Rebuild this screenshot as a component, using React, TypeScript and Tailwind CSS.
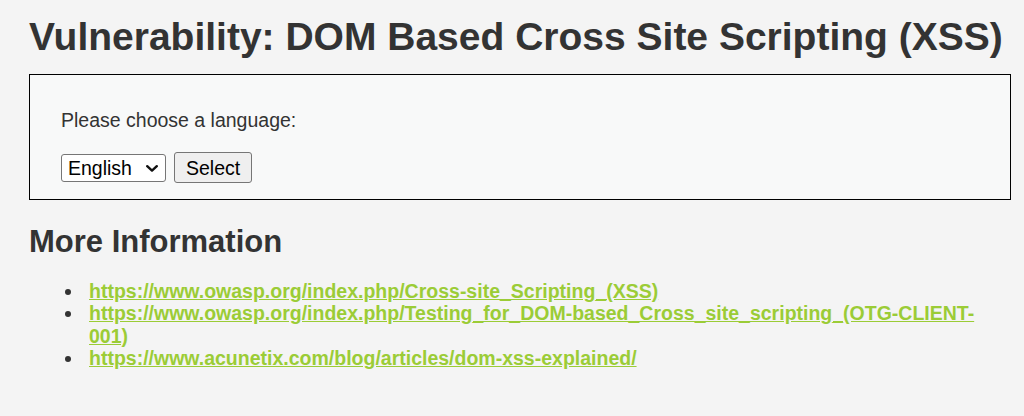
import React from "react";

export default function App() {
  const links = [
    "https://www.owasp.org/index.php/Cross-site_Scripting_(XSS)",
    "https://www.owasp.org/index.php/Testing_for_DOM-based_Cross_site_scripting_(OTG-CLIENT-001)",
    "https://www.acunetix.com/blog/articles/dom-xss-explained/",
  ];
  return (
    <div
      className="min-h-[416px] w-full bg-[#f4f4f4] pl-[29px] pr-[13px] pt-[14px] pb-[20px] text-[#333333]"
      style={{ fontFamily: '"Liberation Sans", Arial, sans-serif' }}
    >
      <h1 className="m-0 text-[39px] font-bold leading-[45px] text-[#333333]">
        Vulnerability: DOM Based Cross Site Scripting (XSS)
      </h1>

      <div className="mt-[15px] border border-black bg-[#f8f9f9] pl-[31px] pr-[20px] pt-[34px] pb-[16px]">
        <p className="m-0 text-[19.5px] leading-[22px] text-[#333333]">
          Please choose a language:
        </p>
        <div className="mt-[21px] flex h-[31px] items-center gap-[8px]">
          <div className="relative h-[28px] w-[105px]">
            <select
              defaultValue="English"
              className="h-[28px] w-[105px] appearance-none rounded-[3px] border border-[#767676] bg-white pl-[6px] text-[19.5px] leading-[24px] text-black outline-none"
            >
              <option value="English">English</option>
              <option value="French">French</option>
              <option value="Spanish">Spanish</option>
              <option value="German">German</option>
            </select>
            <svg
              className="pointer-events-none absolute right-[8px] top-[11px]"
              width="12"
              height="7"
              viewBox="0 0 12 7"
              fill="none"
            >
              <path
                d="M1.2 1.2 L6 5.6 L10.8 1.2"
                stroke="#111"
                strokeWidth="2.4"
                strokeLinecap="round"
                strokeLinejoin="round"
              />
            </svg>
          </div>
          <button
            type="button"
            className="h-[31px] rounded-[3px] border border-[#767676] bg-[#efefef] px-[11px] text-[19.5px] leading-[24px] text-black"
          >
            Select
          </button>
        </div>
      </div>

      <h2 className="m-0 mt-[24px] text-[31px] font-bold leading-[36px] text-[#333333]">
        More Information
      </h2>

      <ul className="m-0 mt-[20px] list-none p-0">
        {links.map((href) => (
          <li key={href} className="flex text-[19.5px] leading-[22.3px]">
            <span className="flex w-[60px] shrink-0 justify-end pr-[18px]">
              <span className="mt-[9px] block h-[6px] w-[6px] rounded-full bg-[#333333]" />
            </span>
            <a
              href={href}
              className="min-w-0 font-bold text-[#9bcc36] underline decoration-[#9bcc36]"
            >
              {href}
            </a>
          </li>
        ))}
      </ul>
    </div>
  );
}
